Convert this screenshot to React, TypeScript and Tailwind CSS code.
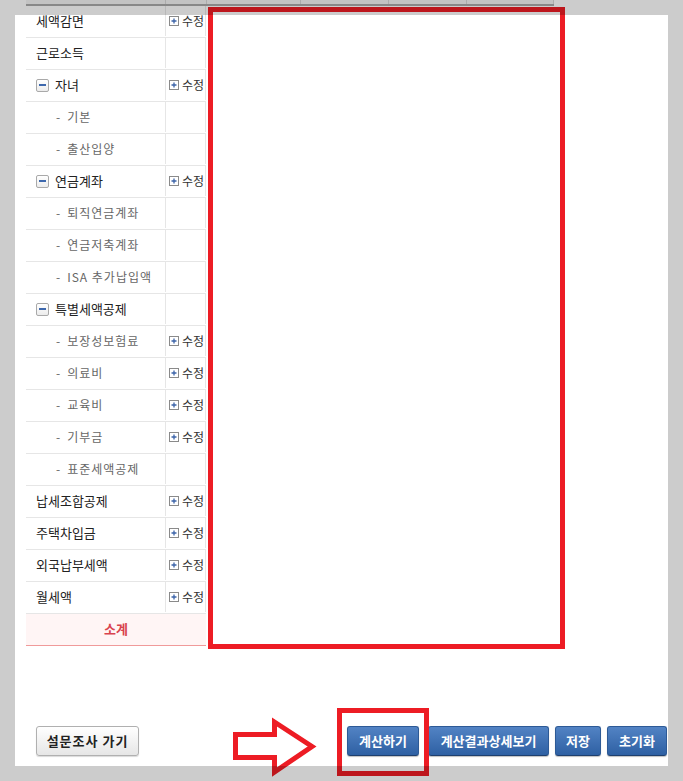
import React from "react";

type Row = {
  label: string;
  level: "top" | "group" | "sub";
  edit?: boolean;
};

const ROWS: Row[] = [
  { label: "세액감면", level: "top", edit: true },
  { label: "근로소득", level: "top" },
  { label: "자녀", level: "group", edit: true },
  { label: "기본", level: "sub" },
  { label: "출산입양", level: "sub" },
  { label: "연금계좌", level: "group", edit: true },
  { label: "퇴직연금계좌", level: "sub" },
  { label: "연금저축계좌", level: "sub" },
  { label: "ISA 추가납입액", level: "sub" },
  { label: "특별세액공제", level: "group" },
  { label: "보장성보험료", level: "sub", edit: true },
  { label: "의료비", level: "sub", edit: true },
  { label: "교육비", level: "sub", edit: true },
  { label: "기부금", level: "sub", edit: true },
  { label: "표준세액공제", level: "sub" },
  { label: "납세조합공제", level: "top", edit: true },
  { label: "주택차입금", level: "top", edit: true },
  { label: "외국납부세액", level: "top", edit: true },
  { label: "월세액", level: "top", edit: true },
];

/* header columns peeking out above the table (under the dim overlay) */
const HEADER_COLS = [140, 41, 94, 88, 78, 87];

function MinusBox() {
  return (
    <span className="mr-[6px] flex h-[13px] w-[13px] items-center justify-center rounded-[2px] border border-[#a9a9a9] bg-gradient-to-b from-white to-[#ececec]">
      <span className="h-[2px] w-[7px] bg-[#3d68ad]" />
    </span>
  );
}

function PlusBox() {
  return (
    <svg width="10" height="10" viewBox="0 0 10 10" className="mr-[3px] shrink-0">
      <rect x="0.5" y="0.5" width="9" height="9" fill="#fff" stroke="#8a8a8a" />
      <path d="M2.5 5h5M5 2.5v5" stroke="#3b63a8" strokeWidth="1.3" />
    </svg>
  );
}

function TableRow({ row }: { row: Row }) {
  return (
    <div className="flex h-[32px] border-b border-[#e6e6e6] pb-[1px]">
      <div className="flex w-[140px] items-center border-r border-[#e6e6e6] pl-[10px]">
        {row.level === "group" && <MinusBox />}
        {row.level === "sub" ? (
          <span className="flex pl-[20px] text-[12px] tracking-[1px] text-[#666]">
            <span>-</span>
            <span className="ml-[6px]">{row.label}</span>
          </span>
        ) : (
          <span className="text-[13px] text-[#222]">{row.label}</span>
        )}
      </div>
      <div className="flex w-[40px] items-center border-r border-[#e6e6e6] pl-[3px]">
        {row.edit && (
          <>
            <PlusBox />
            <span className="whitespace-nowrap text-[12px] text-[#333]">수정</span>
          </>
        )}
      </div>
    </div>
  );
}

function BlueButton({ label, width }: { label: string; width: string }) {
  return (
    <button
      className={`${width} h-[30px] rounded-[3px] border border-[#2d5a96] border-b-[#1e3f6e] bg-gradient-to-b from-[#5283c4] to-[#2e60a3] text-[13px] font-bold text-white shadow-[0_1px_1px_rgba(0,0,0,0.25)]`}
    >
      {label}
    </button>
  );
}

export default function App() {
  return (
    <div className="relative h-[781px] w-[683px] overflow-hidden bg-white font-['Noto_Sans_CJK_KR','Noto_Sans',sans-serif]">
      <div className="pl-[26px]">
        {/* header remnant */}
        <div className="flex h-[4px] w-[528px] bg-[#f4f4f4]">
          {HEADER_COLS.map((w, i) => (
            <div
              key={i}
              className="h-full border-r border-[#d8d8d8]"
              style={{ width: w }}
            />
          ))}
        </div>
        <div className="h-[2px] w-[528px] bg-[#ababab]" />

        <div className="w-[180px]">
          {ROWS.map((row) => (
            <TableRow key={row.label} row={row} />
          ))}
          <div className="flex h-[32px] items-center justify-center border-b border-[#f09a9a] bg-[#fff5f5] pb-[1px] text-[13px] font-bold text-[#d9434e]">
            소계
          </div>
        </div>
      </div>

      {/* bottom buttons */}
      <div className="mt-[80px] flex items-start justify-between pl-[36px] pr-[16px]">
        <button className="h-[30px] w-[103px] rounded-[3px] border border-[#b0b0b0] bg-gradient-to-b from-white to-[#e6e6e6] text-[13px] font-bold tracking-[1px] text-[#222] shadow-[0_1px_1px_rgba(0,0,0,0.15)]">
          설문조사 가기
        </button>
        <div className="flex">
          <BlueButton label="계산하기" width="w-[72px]" />
          <div className="ml-[9px]">
            <BlueButton label="계산결과상세보기" width="w-[121px]" />
          </div>
          <div className="ml-[6px]">
            <BlueButton label="저장" width="w-[46px]" />
          </div>
          <div className="ml-[6px]">
            <BlueButton label="초기화" width="w-[60px]" />
          </div>
        </div>
      </div>

      {/* red annotations */}
      <div className="absolute left-[208px] top-[7px] h-[642px] w-[357px] border-[5px] border-[#ed1c24] bg-white" />
      <div className="absolute left-[337px] top-[708px] h-[68px] w-[92px] border-[5px] border-[#ed1c24]" />
      <svg
        className="absolute left-[226px] top-[712px]"
        width="100"
        height="69"
        viewBox="0 0 100 69"
      >
        <polygon
          points="9.5,22.5 48.5,22.5 48.5,10 86,34.5 48.5,60 48.5,45.5 9.5,45.5"
          fill="none"
          stroke="#ed1c24"
          strokeWidth="5"
          strokeLinejoin="miter"
        />
      </svg>

      {/* dim frame overlay */}
      <div className="absolute left-0 top-0 h-[15px] w-full bg-black/20" />
      <div className="absolute left-0 top-[766px] h-[15px] w-full bg-black/20" />
      <div className="absolute left-0 top-[15px] h-[751px] w-[15px] bg-black/20" />
      <div className="absolute left-[668px] top-[15px] h-[751px] w-[15px] bg-black/20" />
    </div>
  );
}
